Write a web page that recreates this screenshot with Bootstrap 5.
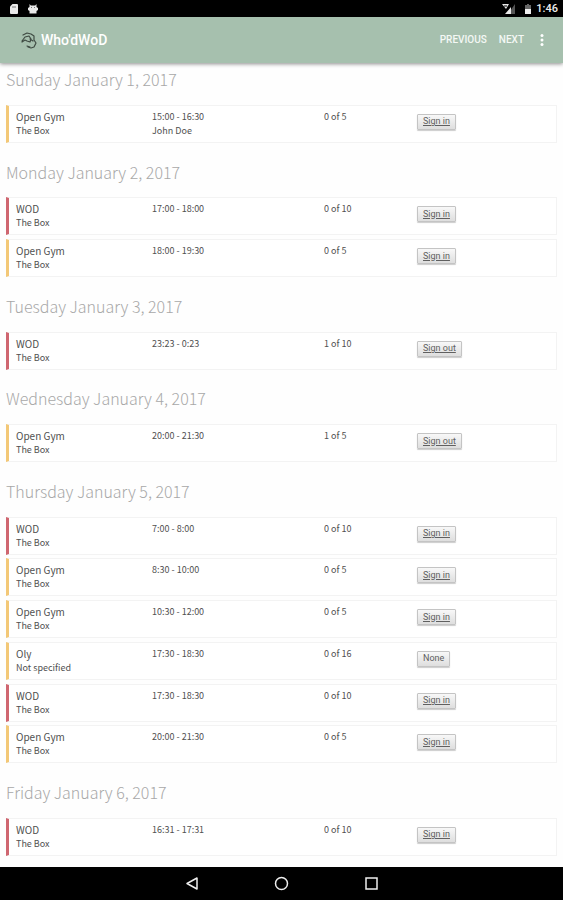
<!DOCTYPE html>
<html lang="en">
<head>
<meta charset="utf-8">
<meta name="viewport" content="width=device-width, initial-scale=1">
<title>Who'dWoD</title>
<link href="https://cdn.jsdelivr.net/npm/bootstrap@5.3.0/dist/css/bootstrap.min.css" rel="stylesheet">
<style>
body { font-family: "Noto Sans CJK SC", "Noto Sans", sans-serif; background: #fefefe; color: #505050; }
svg { display: block; }
.status-bar { height: 17px; background: #000; color: #eee; font: 500 11px/17px Roboto, sans-serif; padding: 0 5px 0 8px; }
.app-bar { height: 46px; padding: 0 11px 0 20px; background: #a6c0ae; box-shadow: 0 1px 4px rgba(0, 0, 0, .45); font-family: Roboto, sans-serif; }
.app-name { font-size: 14px; line-height: 20px; font-weight: 500; color: #fff; }
.bar-action { font-size: 10px; line-height: 20px; font-weight: 500; color: #f4f8f5; }
.schedule { padding: 0 6px 11px; }
.day-title { margin: 0; padding: 3px 0 12px; font-size: 16px; line-height: 26px; font-weight: 300; color: #a8a8a8; }
.day-title ~ .day-title { padding: 15px 0 12px; }
.slot { display: grid; grid-template-columns: 136fr 172fr 93fr 139fr; height: 38px; margin-bottom: 3px; padding: 4px 0 0 7px; border: 1px solid #f3f3f3; border-left: 3px solid #f3c877; background: #fff; font-size: 9px; line-height: 14px; }
.slot:has(+ .day-title), .slot:last-child { margin-bottom: 0; }
.slot.wod { border-left-color: #cf6670; }
.slot-name { font-size: 10px; line-height: 14px; }
.slot-btn { height: 16px; margin-top: 4px; padding: 0 5px; border: 1px solid #c4c4c4; border-radius: 1px; background: linear-gradient(#f8f8f8, #dedede); box-shadow: 0 1px 1px rgba(0, 0, 0, .2); color: #606060; font: 9px/13px Roboto, sans-serif; }
.nav-keys { height: 33px; background: #000; gap: 75px; }
</style>
<script src="https://cdn.jsdelivr.net/npm/bootstrap@5.3.0/dist/js/bootstrap.bundle.min.js" defer></script>
</head>
<body>
<div class="d-flex flex-column min-vh-100">
  <div class="status-bar d-flex align-items-center">
    <svg width="12" height="12" viewBox="0 0 12 12"><path fill="#e8e8e8" d="M4.500 1H9q1 0 1 1v8q0 1-1 1H3q-1 0-1-1V3.500z"/><path stroke="#777" d="M5 3v2M7 3v2"/></svg>
    <svg class="ms-2" width="10" height="12" viewBox="1 0 10 12"><path fill="#e8e8e8" d="M2.500 1l1.300 1.500h4.400L9.500 1v3l1.500 1v2l-1.500 1v2.500h-7V8L1 7V5l1.500-1z"/><path stroke="#777" d="M4 4.500h1M7 4.500h1"/></svg>
    <svg class="ms-auto" width="14" height="12" viewBox="0 0 14 12" fill="none"><path fill="#555" d="M13 1v10H6z"/><path fill="#e8e8e8" d="M0 1h7L4 6zM9 4v7H3z"/><path stroke="#000" d="M2 3h3"/></svg>
    <svg class="ms-2" width="8" height="12" viewBox="0 0 8 12"><path fill="#666" d="M1 2h2V1h2v1h2v4H1z"/><path fill="#eee" d="M1 6h6v5H1z"/></svg>
    <span class="ms-1">1:46</span>
  </div>
  <header class="app-bar d-flex align-items-center position-relative">
    <svg width="17" height="17" viewBox="0 0 17 17" fill="none" stroke="#3f4b43" stroke-width="1.200" stroke-linecap="round" stroke-linejoin="round"><path d="M3 3l4-2 4 1 3 2v4l2 3-2 4-3 1-3-1M2 9l3-4 4-1 2 3-1 3-3-1-2-1-3 2M10 7l3 2M7 14l3 1"/></svg>
    <span class="app-name ms-1">Who'dWoD</span>
    <nav class="d-flex align-items-center ms-auto">
      <a href="#" class="bar-action text-decoration-none">PREVIOUS</a>
      <a href="#" class="bar-action text-decoration-none ms-2 ps-1">NEXT</a>
      <button type="button" class="btn p-0 border-0 ms-2" aria-label="More options"><svg width="20" height="16" viewBox="0 0 20 16" fill="#fff"><circle cx="10" cy="3.500" r="1.500"/><circle cx="10" cy="8" r="1.500"/><circle cx="10" cy="12.500" r="1.500"/></svg></button>
    </nav>
  </header>
  <main class="schedule flex-grow-1 d-flex flex-column justify-content-between">
    <h2 class="day-title">Sunday January 1, 2017</h2>
    <article class="slot"><div><div class="slot-name">Open Gym</div><div>The Box</div></div><div>15:00 - 16:30<div>John Doe</div></div><div>0 of 5</div><div><button type="button" class="slot-btn text-decoration-underline">Sign in</button></div></article>
    <h2 class="day-title">Monday January 2, 2017</h2>
    <article class="slot wod"><div><div class="slot-name">WOD</div><div>The Box</div></div><div>17:00 - 18:00</div><div>0 of 10</div><div><button type="button" class="slot-btn text-decoration-underline">Sign in</button></div></article>
    <article class="slot"><div><div class="slot-name">Open Gym</div><div>The Box</div></div><div>18:00 - 19:30</div><div>0 of 5</div><div><button type="button" class="slot-btn text-decoration-underline">Sign in</button></div></article>
    <h2 class="day-title">Tuesday January 3, 2017</h2>
    <article class="slot wod"><div><div class="slot-name">WOD</div><div>The Box</div></div><div>23:23 - 0:23</div><div>1 of 10</div><div><button type="button" class="slot-btn text-decoration-underline">Sign out</button></div></article>
    <h2 class="day-title">Wednesday January 4, 2017</h2>
    <article class="slot"><div><div class="slot-name">Open Gym</div><div>The Box</div></div><div>20:00 - 21:30</div><div>1 of 5</div><div><button type="button" class="slot-btn text-decoration-underline">Sign out</button></div></article>
    <h2 class="day-title">Thursday January 5, 2017</h2>
    <article class="slot wod"><div><div class="slot-name">WOD</div><div>The Box</div></div><div>7:00 - 8:00</div><div>0 of 10</div><div><button type="button" class="slot-btn text-decoration-underline">Sign in</button></div></article>
    <article class="slot"><div><div class="slot-name">Open Gym</div><div>The Box</div></div><div>8:30 - 10:00</div><div>0 of 5</div><div><button type="button" class="slot-btn text-decoration-underline">Sign in</button></div></article>
    <article class="slot"><div><div class="slot-name">Open Gym</div><div>The Box</div></div><div>10:30 - 12:00</div><div>0 of 5</div><div><button type="button" class="slot-btn text-decoration-underline">Sign in</button></div></article>
    <article class="slot"><div><div class="slot-name">Oly</div><div>Not specified</div></div><div>17:30 - 18:30</div><div>0 of 16</div><div><button type="button" class="slot-btn">None</button></div></article>
    <article class="slot wod"><div><div class="slot-name">WOD</div><div>The Box</div></div><div>17:30 - 18:30</div><div>0 of 10</div><div><button type="button" class="slot-btn text-decoration-underline">Sign in</button></div></article>
    <article class="slot"><div><div class="slot-name">Open Gym</div><div>The Box</div></div><div>20:00 - 21:30</div><div>0 of 5</div><div><button type="button" class="slot-btn text-decoration-underline">Sign in</button></div></article>
    <h2 class="day-title">Friday January 6, 2017</h2>
    <article class="slot wod"><div><div class="slot-name">WOD</div><div>The Box</div></div><div>16:31 - 17:31</div><div>0 of 10</div><div><button type="button" class="slot-btn text-decoration-underline">Sign in</button></div></article>
  </main>
  <footer class="nav-keys d-flex justify-content-center align-items-center">
    <button type="button" class="btn p-0 border-0" aria-label="Back"><svg width="15" height="15" viewBox="0 0 15 15" fill="none" stroke="#eee" stroke-width="1.500" stroke-linejoin="round"><path d="M13 2v11L3 7.500z"/></svg></button>
    <button type="button" class="btn p-0 border-0" aria-label="Home"><svg width="15" height="15" viewBox="0 0 15 15" fill="none" stroke="#eee" stroke-width="1.500"><circle cx="7.500" cy="7.500" r="6"/></svg></button>
    <button type="button" class="btn p-0 border-0" aria-label="Recent apps"><svg width="15" height="15" viewBox="0 0 15 15" fill="none" stroke="#eee" stroke-width="1.500"><path d="M2 2h11v11H2z"/></svg></button>
  </footer>
</div>
</body>
</html>
